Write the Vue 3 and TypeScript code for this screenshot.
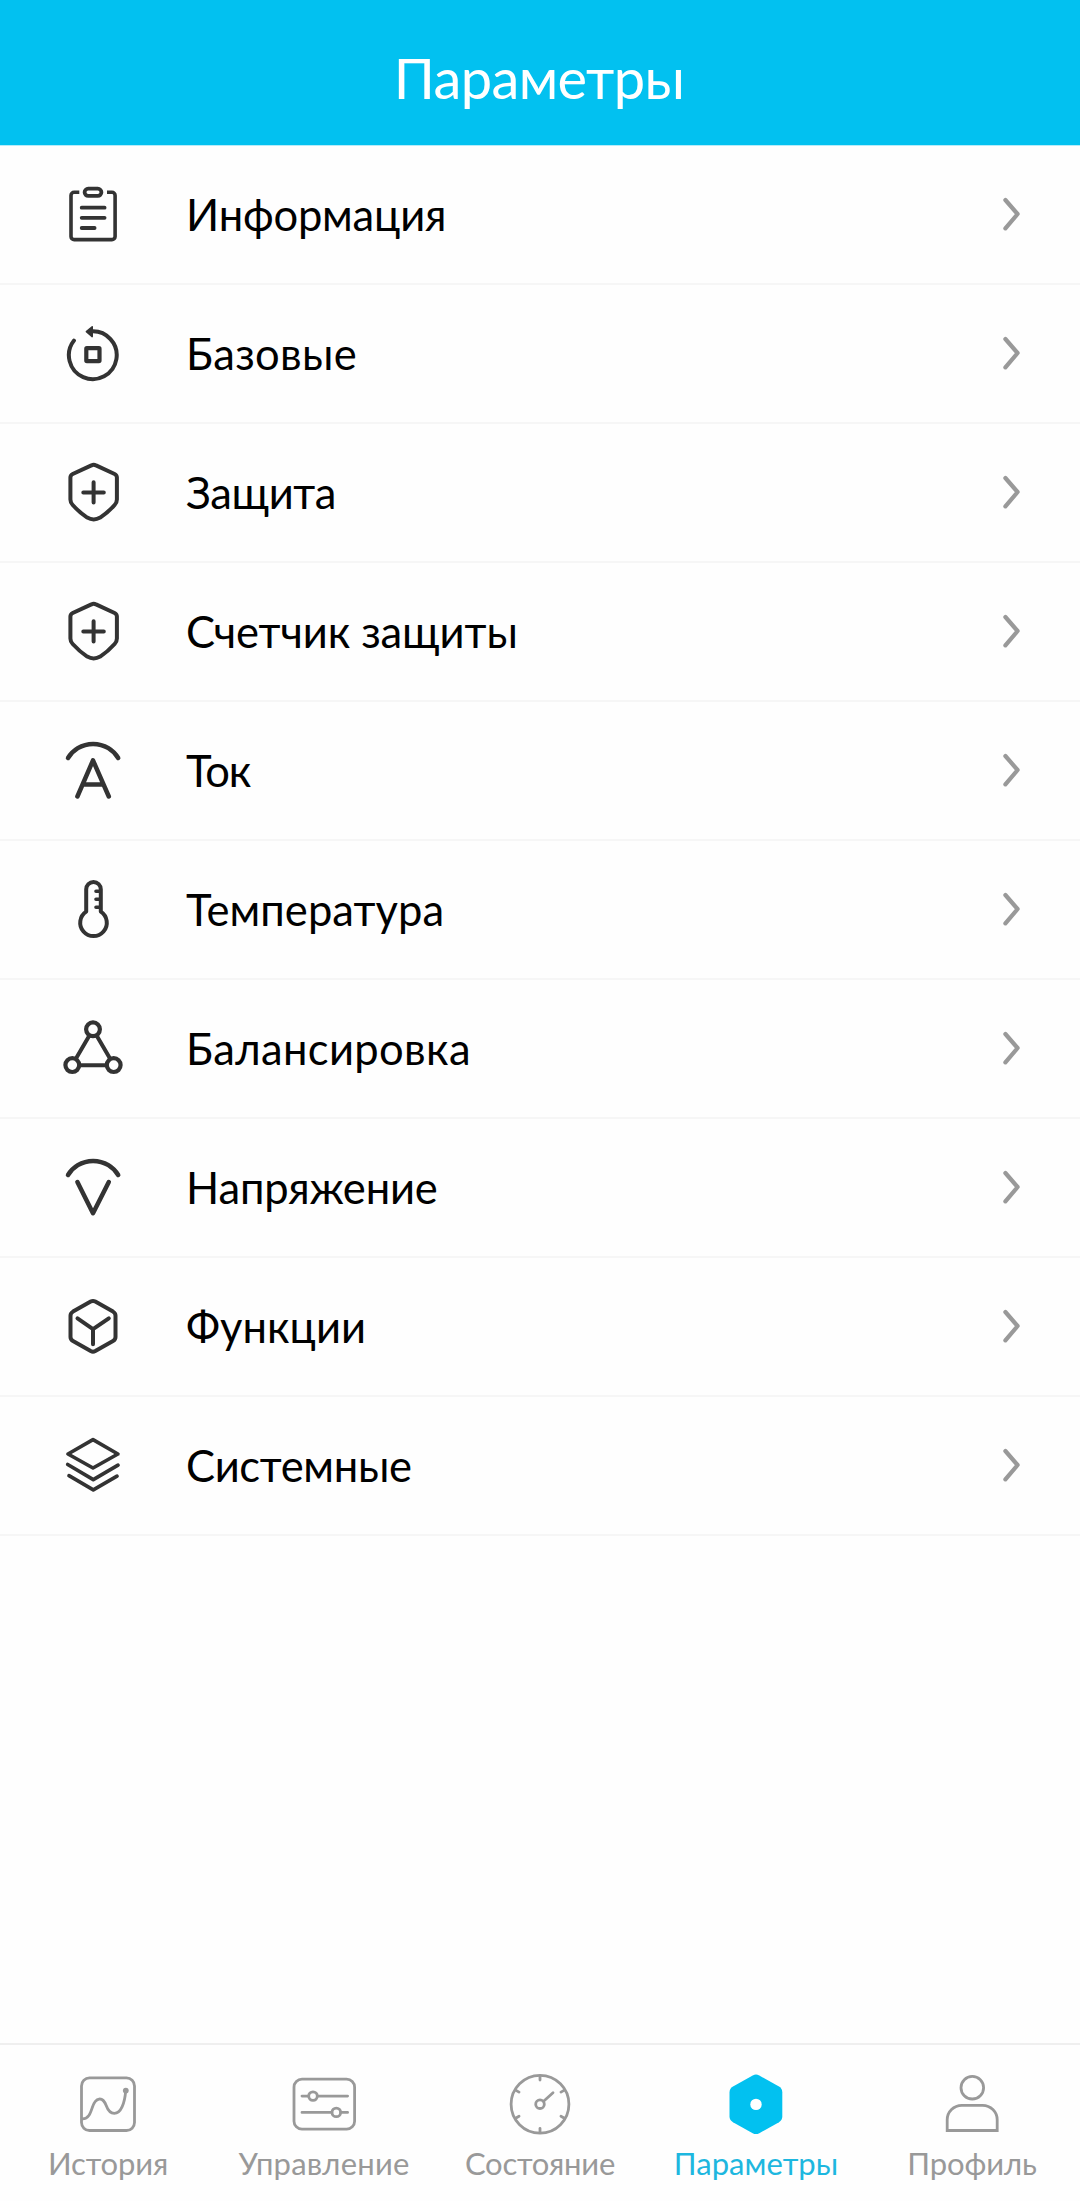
<script setup lang="ts">
interface MenuItem {
  label: string
  icon: string
  // letter-spacing in px
  tracking: number
}

interface TabItem extends MenuItem {
  active?: boolean
}

const items: MenuItem[] = [
  { label: 'Информация', icon: 'clipboard', tracking: -0.19 },
  { label: 'Базовые', icon: 'cycle', tracking: 0.35 },
  { label: 'Защита', icon: 'shield', tracking: -0.4 },
  { label: 'Счетчик защиты', icon: 'shield', tracking: -0.1 },
  { label: 'Ток', icon: 'ampere', tracking: -1.2 },
  { label: 'Температура', icon: 'thermometer', tracking: 0.08 },
  { label: 'Балансировка', icon: 'nodes', tracking: 0.36 },
  { label: 'Напряжение', icon: 'volt', tracking: -0.15 },
  { label: 'Функции', icon: 'cube', tracking: 0.03 },
  { label: 'Системные', icon: 'layers', tracking: -0.3 },
]

const tabs: TabItem[] = [
  { label: 'История', icon: 'chart', tracking: -0.13 },
  { label: 'Управление', icon: 'sliders', tracking: 0.2 },
  { label: 'Состояние', icon: 'gauge', tracking: -0.22 },
  { label: 'Параметры', icon: 'hexagon', tracking: 0.05, active: true },
  { label: 'Профиль', icon: 'user', tracking: -0.13 },
]

const gaugeTicks = [0, 60, 120, 180, 240, 300]
</script>

<template>
  <div class="screen">
    <header class="header">
      <h1 class="title">Параметры</h1>
    </header>

    <main class="list">
      <div v-for="item in items" :key="item.label" class="row">
        <svg class="row-icon" viewBox="0 0 60 60">
          <template v-if="item.icon === 'clipboard'">
            <path d="M16.3 8.3H11.2A3.2 3.2 0 0 0 8 11.5V52.4A3.2 3.2 0 0 0 11.2 55.6H48.9A3.2 3.2 0 0 0 52.1 52.4V11.5A3.2 3.2 0 0 0 48.9 8.3H44" stroke-width="3.6" stroke-linecap="butt" />
            <rect x="21.6" y="4.7" width="16.8" height="7.2" rx="3.6" stroke-width="3.8" />
            <path d="M18.7 23.7H41.6M18.7 33.8H41.6M18.7 44H31.6" stroke-width="3.8" />
          </template>
          <template v-else-if="item.icon === 'cycle'">
            <path d="M28 8.4A23.9 23.9 0 1 1 10.9 17.6" />
            <path d="M23.4 8.7L29.2 3.8V13.6Z" class="solid" stroke-width="1.6" />
            <rect x="23.3" y="25.2" width="13.2" height="13" rx="0.6" stroke-width="4.2" />
          </template>
          <template v-else-if="item.icon === 'shield'">
            <path d="M28.4 3.4Q30.7 2.1 33 3.4L51.6 12Q53.9 13.1 53.9 15.6V37.4Q53.9 40.4 51.6 43Q44.8 50.6 37.2 55.6Q30.7 59.2 24.2 55.6Q16.6 50.6 9.7 43Q7.4 40.4 7.4 37.4V15.6Q7.4 13.1 9.7 12Z" />
            <path d="M20.3 30.4H40.8M30.6 20.2V40.6" />
          </template>
          <template v-else-if="item.icon === 'ampere'">
            <path d="M5 18A29.4 29.4 0 0 1 55.2 18" stroke-width="4.5" />
            <path d="M14.4 56.5L30 20.4L45.8 56.5M20.5 44.4H39.6" stroke-width="4.5" />
          </template>
          <template v-else-if="item.icon === 'thermometer'">
            <path d="M23.2 32.6V10.2A7.3 7.3 0 0 1 37.8 10.2V32.6A13.3 13.3 0 1 1 23.2 32.6Z" />
            <path d="M33 12.3H37M33 20.3H37M33 28.2H37" stroke-width="3.6" />
          </template>
          <template v-else-if="item.icon === 'nodes'">
            <circle cx="30" cy="11.3" r="6.9" stroke-width="4.2" />
            <circle cx="9.3" cy="47.1" r="6.9" stroke-width="4.2" />
            <circle cx="50.7" cy="47.1" r="6.9" stroke-width="4.2" />
            <path d="M26.4 17.6L13 40.6M33.6 17.6L47 40.6M16.8 47.2H43.2" stroke-linecap="butt" />
          </template>
          <template v-else-if="item.icon === 'volt'">
            <path d="M5 18A29.4 29.4 0 0 1 55.2 18" stroke-width="4.5" />
            <path d="M14.4 25.1L30 56.2L45.8 25.1" stroke-width="4.5" />
          </template>
          <template v-else-if="item.icon === 'cube'">
            <path d="M27.7 5.6Q30 4.4 32.3 5.6L50 15.6Q52.5 17.1 52.5 19.7V41Q52.5 43.6 50 45L32.3 55.1Q30 56.3 27.7 55.1L10 45Q7.5 43.6 7.5 41V19.7Q7.5 17.1 10 15.6Z" />
            <path d="M14.5 22.4L30 33.2L45.8 22.4M30 33.2V48.2" />
          </template>
          <template v-else>
            <path d="M30 4.6L54.9 19L30 33L5 19Z" stroke-width="3.7" />
            <path d="M4.7 29.5L30.3 44.7L55 30.2M6 40.7L30.3 54.8L54 41.2" stroke-width="3.7" />
          </template>
        </svg>
        <span class="row-label" :style="{ letterSpacing: item.tracking + 'px' }">{{ item.label }}</span>
        <svg class="chevron" viewBox="0 0 20 36">
          <path d="M3.4 4L15.6 18L3.4 32.4" />
        </svg>
      </div>
    </main>

    <nav class="tabs">
      <div v-for="tab in tabs" :key="tab.label" class="tab" :class="{ active: tab.active }">
        <svg class="tab-icon" viewBox="0 0 66 66">
          <template v-if="tab.icon === 'chart'">
            <rect x="6.5" y="5.9" width="53" height="52.6" rx="8" />
            <path d="M7.3 46.8C13.5 47 15.3 41.5 17.3 35.5C20.6 24.9 27.6 24.2 31.2 33.5C33.4 39.6 35.6 41.4 39.3 41.4C46 41.4 49.8 31 50.7 18.7" />
            <circle cx="50.8" cy="18.6" r="2.9" class="solid" stroke="none" />
          </template>
          <template v-else-if="tab.icon === 'sliders'">
            <rect x="3" y="7.2" width="60.6" height="50" rx="8" />
            <path d="M11 24.1H17.6M26.6 24.1H56.6M11 40.4H40.8M49.8 40.4H56.6" />
            <circle cx="22" cy="24.1" r="4.3" />
            <circle cx="45.3" cy="40.4" r="4.3" />
          </template>
          <template v-else-if="tab.icon === 'gauge'">
            <circle cx="33" cy="32.2" r="28.9" />
            <path v-for="angle in gaugeTicks" :key="angle" d="M33 4V8" :transform="`rotate(${angle} 33 32.2)`" />
            <circle cx="33" cy="32.2" r="4.3" />
            <path d="M36.6 29.2L46 20.8" />
          </template>
          <template v-else-if="tab.icon === 'hexagon'">
            <path class="solid" stroke="none" d="M29.7 3.5Q33 1.7 36.3 3.5L56 14.6Q59.3 16.6 59.3 20.2V44.6Q59.3 48.2 56 50.2L36.3 61.2Q33 63 29.7 61.2L10 50.2Q6.5 48.2 6.5 44.6V20.2Q6.5 16.6 10 14.6Z" />
            <circle cx="33" cy="32.4" r="5.7" fill="#fff" stroke="none" />
          </template>
          <template v-else>
            <circle cx="33.3" cy="15.7" r="11.3" />
            <path d="M8.2 58.5V47.8A14.6 14.6 0 0 1 22.8 33.3H43.6A14.6 14.6 0 0 1 58.2 47.8V58.5Z" stroke-linejoin="miter" />
          </template>
        </svg>
        <span class="tab-label" :style="{ letterSpacing: tab.tracking + 'px' }">{{ tab.label }}</span>
      </div>
    </nav>
  </div>
</template>

<style>
body {
  margin: 0;
  background: #fefefe;
}
</style>

<style scoped>
.screen {
  display: flex;
  flex-direction: column;
  width: 1080px;
  height: 2201px;
  overflow: hidden;
  background: #fefefe;
  font-family: Lato, "Noto Sans", sans-serif;
}

.header {
  display: flex;
  justify-content: center;
  box-sizing: border-box;
  height: 146px;
  padding: 43px 2px 0 0;
  border-bottom: 1px solid #b5ecfa;
  background: #02c1f0;
}

.title {
  margin: 0;
  color: #fff;
  font-size: 56px;
  font-weight: 400;
  line-height: 70px;
  letter-spacing: -0.6px;
}

.list {
  flex: 1;
}

.row {
  display: flex;
  align-items: center;
  box-sizing: border-box;
  height: 139px;
  padding: 0 60px 1px 63px;
  border-bottom: 2px solid #f6f6f6;
}

.row-icon {
  width: 60px;
  height: 60px;
  fill: none;
  stroke: #333;
  stroke-width: 4;
  stroke-linecap: round;
  stroke-linejoin: round;
}

.row-icon .solid {
  fill: #333;
}

.row-label {
  flex: 1;
  margin: -1px 0 0 63px;
  color: #000;
  font-size: 43.5px;
  line-height: 60px;
  white-space: nowrap;
}

.chevron {
  width: 20px;
  height: 36px;
  margin-right: -2px;
  fill: none;
  stroke: #999;
  stroke-width: 4.2;
  stroke-linecap: round;
  stroke-linejoin: round;
}

.tabs {
  display: flex;
  box-sizing: border-box;
  height: 158px;
  border-top: 2px solid #efefef;
}

.tab {
  display: flex;
  flex: 1;
  flex-direction: column;
  align-items: center;
  padding-top: 27px;
  color: #999;
}

.tab-icon {
  width: 66px;
  height: 66px;
  fill: none;
  stroke: currentColor;
  stroke-width: 2.8;
  stroke-linecap: round;
  stroke-linejoin: round;
}

.tab-icon .solid {
  fill: currentColor;
}

.tab-label {
  margin-top: 5px;
  font-size: 31px;
  line-height: 40px;
  white-space: nowrap;
}

.tab.active {
  color: #02c1f0;
}

.tab.active .tab-label {
  color: #1db7df;
}
</style>
